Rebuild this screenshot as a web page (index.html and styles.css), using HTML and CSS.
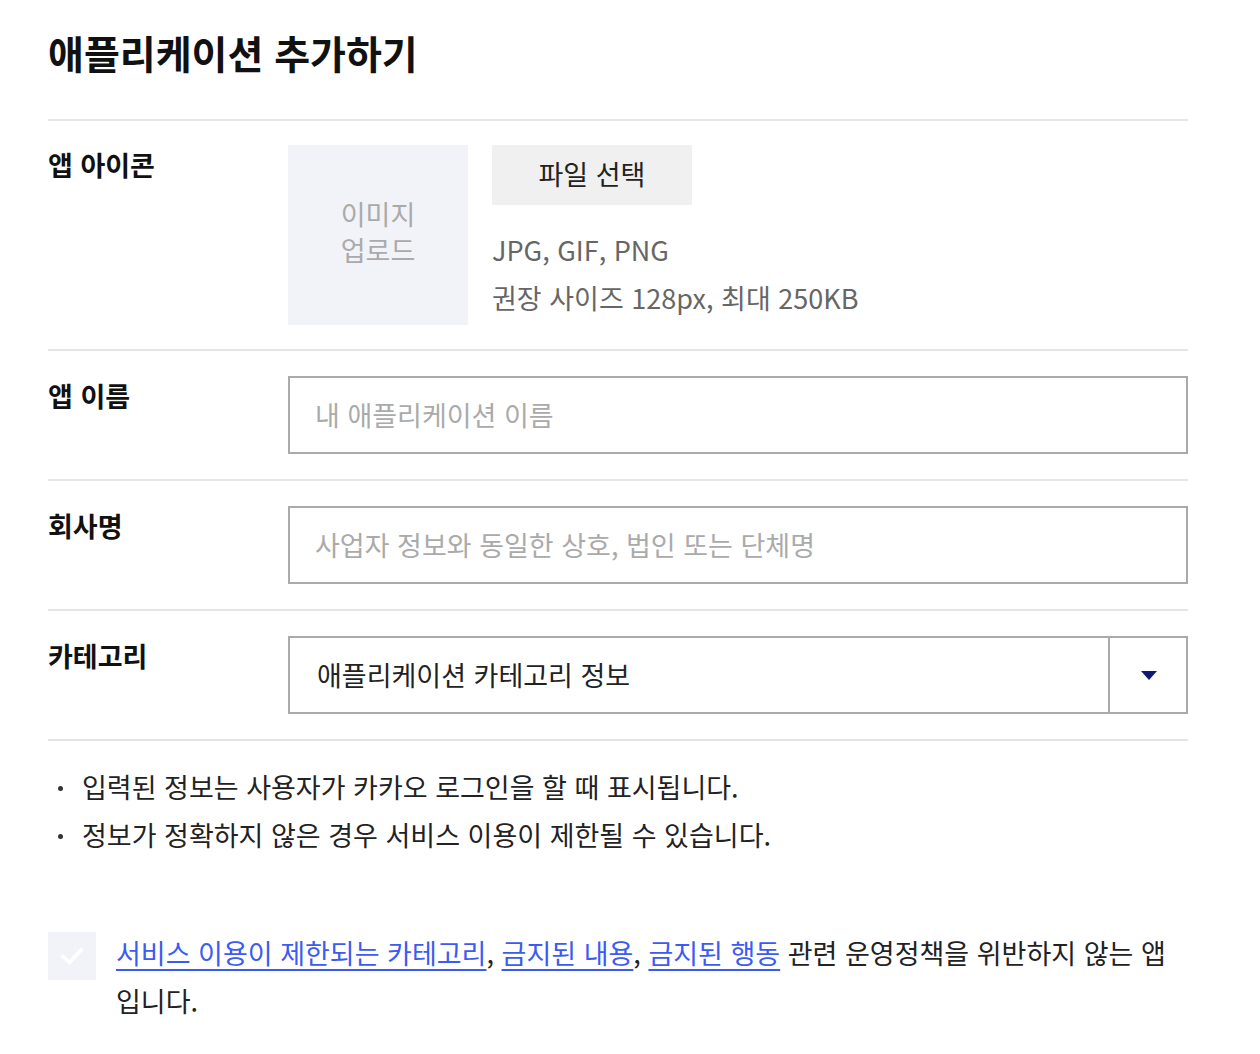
FILE: index.html
```html
<!DOCTYPE html>
<html lang="ko">
<head>
<meta charset="utf-8">
<title>애플리케이션 추가하기</title>
<link rel="stylesheet" href="styles.css">
</head>
<body>
<main class="page">
  <h1 class="title">애플리케이션 추가하기</h1>

  <section class="row row-first">
    <div class="label">앱 아이콘</div>
    <div class="field icon-field">
      <div class="upload-box">이미지<br>업로드</div>
      <div class="upload-info">
        <button class="file-btn" type="button">파일 선택</button>
        <p class="info-text">JPG, GIF, PNG<br>권장 사이즈 128px, 최대 250KB</p>
      </div>
    </div>
  </section>

  <section class="row">
    <div class="label">앱 이름</div>
    <div class="field">
      <input class="text-input" type="text" placeholder="내 애플리케이션 이름">
    </div>
  </section>

  <section class="row">
    <div class="label">회사명</div>
    <div class="field">
      <input class="text-input" type="text" placeholder="사업자 정보와 동일한 상호, 법인 또는 단체명">
    </div>
  </section>

  <section class="row">
    <div class="label">카테고리</div>
    <div class="field">
      <div class="select">
        <span class="select-value">애플리케이션 카테고리 정보</span>
        <span class="select-arrow"><svg width="16" height="10" viewBox="0 0 16 10"><path d="M0 0H16L8 9Z" fill="#0b1a72"/></svg></span>
      </div>
    </div>
  </section>

  <ul class="notes">
    <li>입력된 정보는 사용자가 카카오 로그인을 할 때 표시됩니다.</li>
    <li>정보가 정확하지 않은 경우 서비스 이용이 제한될 수 있습니다.</li>
  </ul>

  <div class="agree">
    <span class="checkbox"><svg width="24" height="20" viewBox="0 0 24 20"><path d="M3 10.5L9.5 16.5L21 4" fill="none" stroke="#ffffff" stroke-width="3.6" stroke-linecap="square"/></svg></span>
    <p class="agree-text"><a href="#">서비스 이용이 제한되는 카테고리</a>, <a href="#">금지된 내용</a>, <a href="#">금지된 행동</a> 관련 운영정책을 위반하지 않는 앱 입니다.</p>
  </div>
</main>
</body>
</html>
```

FILE: styles.css
```css
* { box-sizing: border-box; }

html, body {
  margin: 0;
  padding: 0;
  background: #ffffff;
}

body {
  font-family: "Noto Sans CJK KR", "Noto Sans", sans-serif;
  color: #222222;
  font-size: 27px;
}

.page {
  width: 1140px;
  margin-left: 48px;
}

.title {
  margin: 0;
  height: 121px;
  padding-top: 26px;
  font-size: 39px;
  line-height: 52px;
  font-weight: 700;
  color: #111111;
  border-bottom: 2px solid #e5e5e5;
}

.row {
  display: flex;
  padding: 25px 0;
  border-bottom: 2px solid #e5e5e5;
}

.row-first {
  padding: 24px 0;
}

.label {
  width: 240px;
  flex: none;
  font-weight: 700;
  line-height: 40px;
  color: #111111;
}

.field {
  flex: 1;
  min-width: 0;
}

.icon-field {
  display: flex;
  gap: 24px;
}

.upload-box {
  width: 180px;
  height: 180px;
  background: #f2f3f8;
  color: #aaaaaa;
  display: flex;
  align-items: center;
  justify-content: center;
  text-align: center;
  line-height: 36px;
  padding-bottom: 6px;
}

.upload-info {
  display: flex;
  flex-direction: column;
  align-items: flex-start;
}

.file-btn {
  width: 200px;
  height: 60px;
  border: none;
  background: #f0f0f0;
  font-family: inherit;
  font-size: 27px;
  color: #222222;
  padding: 0 0 4px;
}

.info-text {
  margin: 21px 0 0;
  color: #666666;
  line-height: 48px;
}

.text-input {
  display: block;
  width: 100%;
  height: 78px;
  border: 2px solid #aaaaaa;
  border-radius: 0;
  padding: 0 25px 2px;
  font-family: inherit;
  font-size: 27px;
  color: #222222;
  outline: none;
}

.text-input::placeholder {
  color: #aaaaaa;
}

.select {
  display: flex;
  height: 78px;
  border: 2px solid #aaaaaa;
}

.select-value {
  flex: 1;
  display: flex;
  align-items: center;
  padding: 0 0 2px 27px;
  color: #222222;
}

.select-arrow {
  width: 78px;
  flex: none;
  border-left: 2px solid #aaaaaa;
  display: flex;
  align-items: center;
  justify-content: center;
  padding: 2px 0 0 2px;
}

.select-arrow svg {
  display: block;
}

.notes {
  list-style: none;
  margin: 0;
  padding: 22px 0 0;
}

.notes li {
  position: relative;
  padding-left: 34px;
  line-height: 48px;
  color: #222222;
}

.notes li::before {
  content: "";
  position: absolute;
  left: 10px;
  top: 23px;
  width: 5px;
  height: 5px;
  border-radius: 50%;
  background: #333333;
}

.agree {
  display: flex;
  align-items: flex-start;
  gap: 20px;
  margin-top: 70px;
}

.checkbox {
  flex: none;
  width: 48px;
  height: 48px;
  margin-top: 3px;
  background: #f2f3f8;
  display: flex;
  align-items: center;
  justify-content: center;
}

.agree-text {
  margin: 0;
  flex: 1;
  line-height: 48px;
  color: #222222;
}

.agree-text a {
  color: #3b5bf2;
  text-decoration: underline;
  text-underline-offset: 5px;
  text-decoration-thickness: 2px;
}
```
